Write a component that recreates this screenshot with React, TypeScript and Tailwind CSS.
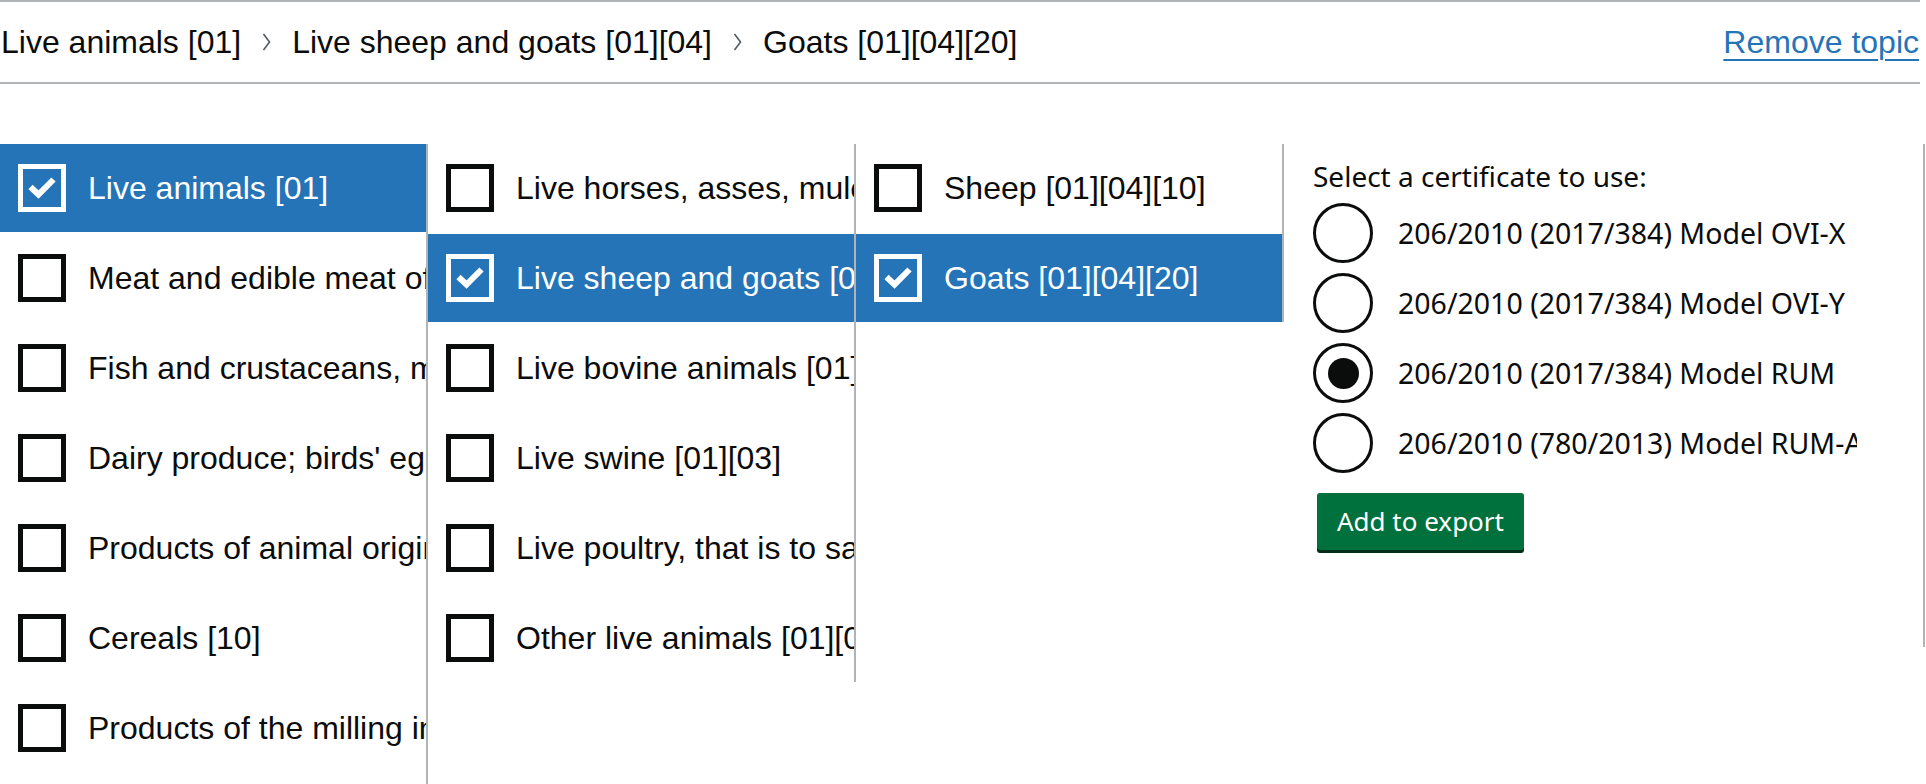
const COLUMNS = [
  [
    { label: "Live animals [01]", checked: true },
    { label: "Meat and edible meat offal [02]", checked: false },
    { label: "Fish and crustaceans, molluscs and other aquatic invertebrates [03]", checked: false },
    { label: "Dairy produce; birds' eggs; natural honey [04]", checked: false },
    { label: "Products of animal origin, not elsewhere specified [05]", checked: false },
    { label: "Cereals [10]", checked: false },
    { label: "Products of the milling industry; malt; starches [11]", checked: false },
    { label: "Oil seeds and oleaginous fruits [12]", checked: false },
  ],
  [
    { label: "Live horses, asses, mules and hinnies [01][01]", checked: false },
    { label: "Live sheep and goats [01][04]", checked: true },
    { label: "Live bovine animals [01][02]", checked: false },
    { label: "Live swine [01][03]", checked: false },
    { label: "Live poultry, that is to say, fowls of the species Gallus domesticus [01][05]", checked: false },
    { label: "Other live animals [01][06]", checked: false },
  ],
  [
    { label: "Sheep [01][04][10]", checked: false },
    { label: "Goats [01][04][20]", checked: true },
  ],
];

const CERTIFICATES = [
  { label: "206/2010 (2017/384) Model OVI-X", selected: false },
  { label: "206/2010 (2017/384) Model OVI-Y", selected: false },
  { label: "206/2010 (2017/384) Model RUM", selected: true },
  { label: "206/2010 (780/2013) Model RUM-A", selected: false },
];

const CRUMBS = ["Live animals [01]", "Live sheep and goats [01][04]", "Goats [01][04][20]"];

function Checkbox({ checked }: { checked: boolean }) {
  return (
    <span
      className={`w-[48px] h-[48px] shrink-0 border-[5px] flex ${
        checked ? "border-white" : "border-[#0b0c0c] bg-white"
      }`}
    >
      {checked && (
        <svg width="38" height="38" viewBox="0 0 38 38">
          <polyline points="7.5,18 15.5,25.5 30.5,10.5" fill="none" stroke="white" strokeWidth={6} />
        </svg>
      )}
    </span>
  );
}

function Chevron() {
  return (
    <svg className="mx-[21px] shrink-0" width="9" height="20" viewBox="0 0 9 20">
      <polyline points="1.5,2 7.5,10 1.5,18" fill="none" stroke="#505a5f" strokeWidth={1.6} />
    </svg>
  );
}

export default function App() {
  return (
    <div className="w-[1926px] bg-white text-[#0b0c0c] font-['Liberation_Sans',Arial,sans-serif]">
      <div className="w-[1920px] h-[84px] border-y-2 border-[#b1b4b6] flex items-center justify-between">
        <div className="flex items-center text-[32px] pl-[1px]">
          {CRUMBS.map((c, i) => (
            <div key={c} className="flex items-center">
              {i > 0 && <Chevron />}
              <span>{c}</span>
            </div>
          ))}
        </div>
        <a
          href="#"
          className="text-[32px] text-[#2574b7] underline decoration-2 underline-offset-[6px] pr-[1px]"
        >
          Remove topic
        </a>
      </div>

      <div className="flex items-start mt-[60px]">
        {COLUMNS.map((col, ci) => (
          <div
            key={ci}
            className="w-[428px] shrink-0 border-r-2 border-[#b1b4b6] flex flex-col gap-[2px] overflow-hidden"
          >
            {col.map((row) => (
              <div
                key={row.label}
                className={`h-[88px] flex items-center gap-[22px] pl-[18px] whitespace-nowrap text-[32px] ${
                  row.checked ? "bg-[#2574b7] text-white" : ""
                }`}
              >
                <Checkbox checked={row.checked} />
                <span>{row.label}</span>
              </div>
            ))}
          </div>
        ))}

        <div className="w-[641px] h-[503px] shrink-0 border-r-2 border-[#b1b4b6] pl-[29px] pt-[13px] font-['Noto_Sans',sans-serif]">
          <p className="text-[28px] leading-[38px]">Select a certificate to use:</p>
          <div className="flex flex-col gap-[10px] mt-[8px]">
            {CERTIFICATES.map((cert) => (
              <label key={cert.label} className="flex items-center gap-[25px] h-[60px]">
                <span className="w-[60px] h-[60px] shrink-0 rounded-full border-[3px] border-[#0b0c0c] flex items-center justify-center">
                  {cert.selected && <span className="w-[31px] h-[31px] rounded-full bg-[#0b0c0c]" />}
                </span>
                <span className="w-[459px] overflow-hidden whitespace-nowrap text-[28.5px]">{cert.label}</span>
              </label>
            ))}
          </div>
          <button className="mt-[20px] ml-[4px] h-[57px] px-[20px] bg-[#00703c] text-white text-[26px] rounded-[3px] shadow-[0_3px_0_#002d18]">
            Add to export
          </button>
        </div>
      </div>
    </div>
  );
}
